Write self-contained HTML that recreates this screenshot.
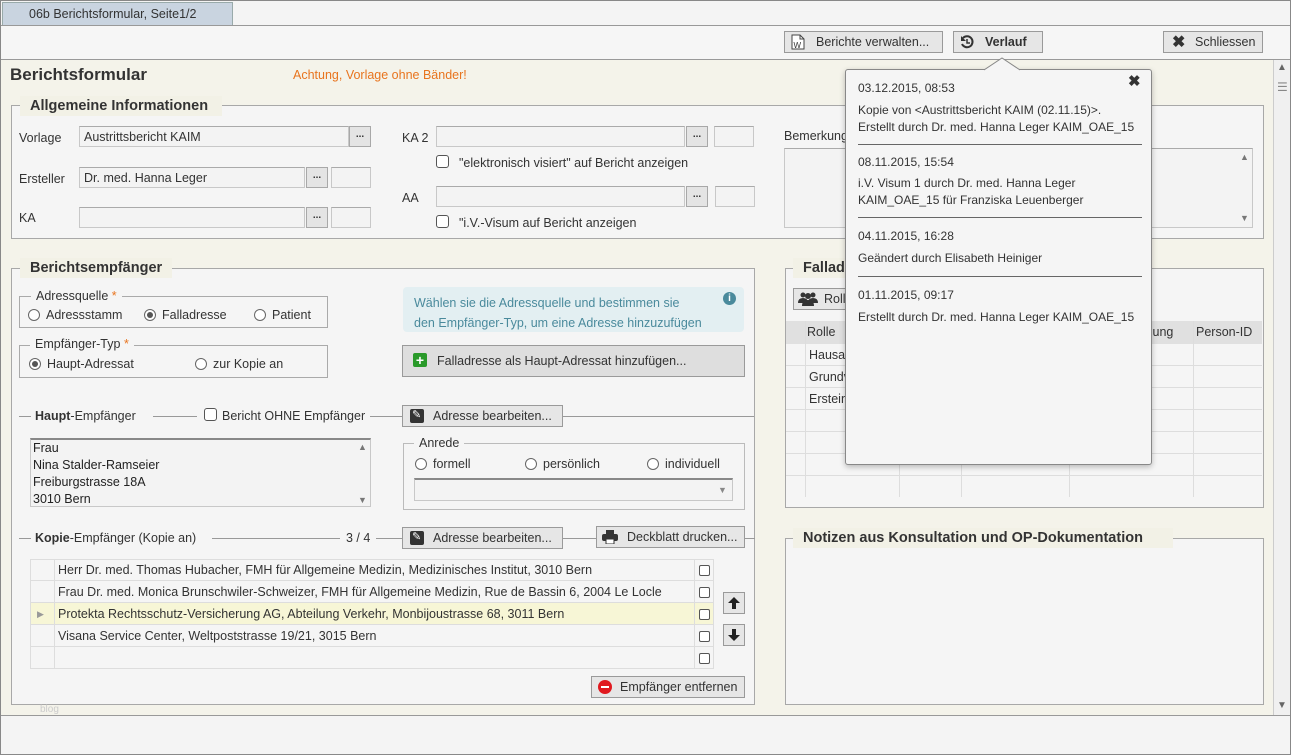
<!DOCTYPE html>
<html><head><meta charset="utf-8"><style>
*{box-sizing:border-box;margin:0;padding:0}
body{width:1291px;height:755px;position:relative;overflow:hidden;background:#fff;font-family:"Liberation Sans",sans-serif;font-size:12.5px;color:#333}
.a{position:absolute}
.t{position:absolute;white-space:nowrap}
.inp{position:absolute;background:#f3f3f3;border:1px solid #c8c8c8;border-top-color:#aaa;padding-left:4px;line-height:20px;white-space:nowrap}
.dots{position:absolute;width:22px;height:21px;background:#e4e4e4;border:1px solid #a8a8a8;text-align:center;font-weight:bold;font-size:10px;line-height:16px}
.btn{position:absolute;background:#e6e6e6;border:1px solid #9a9a9a;white-space:nowrap;line-height:20px}
.box{position:absolute;border:1px solid #a8a8a8;background:#f5f5f5}
.leg{position:absolute;background:#f2f1e6;font-weight:bold;font-size:14.5px;padding:0 10px;line-height:20px;white-space:nowrap}
.cb{position:absolute;width:13px;height:13px;border:1px solid #555;border-radius:3px;background:#fff}
.rb{position:absolute;width:12px;height:12px;border:1px solid #666;border-radius:50%;background:#fff}
.rb.on::after{content:"";position:absolute;left:2px;top:2px;width:6px;height:6px;border-radius:50%;background:#555}
.hl{position:absolute;height:1px;background:#999}
.row{position:absolute;left:31px;width:682px;height:22px;border-bottom:1px solid #ddd;line-height:22px}
.row span{position:absolute;left:27px}
.row i{position:absolute;left:23px;top:0;bottom:0;width:1px;background:#ddd}
.row b{position:absolute;left:663px;top:0;bottom:0;width:1px;background:#ddd}
.row .cb{left:668px;top:6px;width:11px;height:11px;border-radius:2px}
.pop .t{font-size:12px}
</style></head><body>
<div class="a" style="left:0;top:0;width:1291px;height:755px;border:1px solid #888;background:#f4f4f4"></div>
<div class="a" style="left:2px;top:2px;width:231px;height:24px;background:#c9d4e0;border:1px solid #9aa;border-bottom:none"></div>
<div class="t" style="left:29px;top:7px;color:#333">06b Berichtsformular, Seite1/2</div>
<div class="a" style="left:1px;top:25px;width:1289px;height:1px;background:#999"></div>
<div class="a" style="left:1px;top:26px;width:1289px;height:33px;background:#f6f6f6"></div>
<div class="a" style="left:1px;top:59px;width:1289px;height:1px;background:#999"></div>
<div class="btn" style="left:784px;top:31px;width:159px;height:22px;padding-left:31px">Berichte verwalten...</div>
<svg class="a" style="left:791px;top:34px" width="14" height="16"><path d="M1 1h8l4 4v10H1z" fill="#fff" stroke="#444"/><path d="M9 1v4h4" fill="none" stroke="#444"/><text x="2.5" y="14" font-size="8" font-family="Liberation Sans" fill="#333">W</text></svg>
<div class="btn" style="left:953px;top:31px;width:90px;height:22px;padding-left:31px;font-weight:bold">Verlauf</div>
<svg class="a" style="left:960px;top:35px" width="14" height="14"><path d="M3 3A5.5 5.5 0 1 1 2 9" fill="none" stroke="#333" stroke-width="2"/><path d="M1 1v5h5z" fill="#333"/><path d="M7 4v4h3" fill="none" stroke="#333" stroke-width="1.5"/></svg>
<div class="btn" style="left:1163px;top:31px;width:100px;height:22px;padding-left:31px">Schliessen</div>
<div class="t" style="left:1172px;top:32px;font-size:16px;font-weight:bold">✖</div>
<div class="a" style="left:1px;top:60px;width:1272px;height:655px;background:#f4f3ea"></div>
<div class="a" style="left:1273px;top:60px;width:17px;height:655px;background:#f0f0f0;border-left:1px solid #ccc"></div>
<div class="t" style="left:1277px;top:62px;font-size:10px;color:#666">▲</div>
<div class="t" style="left:1277px;top:80px;font-size:12px;color:#888">☰</div>
<div class="t" style="left:1277px;top:700px;font-size:10px;color:#666">▼</div>
<div class="a" style="left:1px;top:715px;width:1289px;height:1px;background:#999"></div>
<div class="a" style="left:1px;top:716px;width:1289px;height:38px;background:#f4f4f4"></div>
<div class="t" style="left:10px;top:65px;font-size:17px;font-weight:bold">Berichtsformular</div>
<div class="t" style="left:293px;top:68px;color:#e8741e">Achtung, Vorlage ohne Bänder!</div>
<div class="box" style="left:11px;top:105px;width:1253px;height:134px"></div>
<div class="leg" style="left:20px;top:96px;width:202px">Allgemeine Informationen</div>
<div class="t" style="left:19px;top:131px">Vorlage</div>
<div class="inp" style="left:79px;top:126px;width:270px;height:21px">Austrittsbericht KAIM</div>
<div class="dots" style="left:349px;top:126px">...</div>
<div class="t" style="left:19px;top:172px">Ersteller</div>
<div class="inp" style="left:79px;top:167px;width:226px;height:21px">Dr. med. Hanna Leger</div>
<div class="dots" style="left:306px;top:167px">...</div>
<div class="inp" style="left:331px;top:167px;width:40px;height:21px"></div>
<div class="t" style="left:19px;top:211px">KA</div>
<div class="inp" style="left:79px;top:207px;width:226px;height:21px"></div>
<div class="dots" style="left:306px;top:207px">...</div>
<div class="inp" style="left:331px;top:207px;width:40px;height:21px"></div>
<div class="t" style="left:402px;top:131px">KA 2</div>
<div class="inp" style="left:436px;top:126px;width:249px;height:21px"></div>
<div class="dots" style="left:686px;top:126px">...</div>
<div class="inp" style="left:714px;top:126px;width:40px;height:21px"></div>
<div class="cb" style="left:436px;top:155px"></div>
<div class="t" style="left:459px;top:156px">"elektronisch visiert" auf Bericht anzeigen</div>
<div class="t" style="left:402px;top:191px">AA</div>
<div class="inp" style="left:436px;top:186px;width:249px;height:21px"></div>
<div class="dots" style="left:686px;top:186px">...</div>
<div class="inp" style="left:715px;top:186px;width:40px;height:21px"></div>
<div class="cb" style="left:436px;top:215px"></div>
<div class="t" style="left:459px;top:216px">"i.V.-Visum auf Bericht anzeigen</div>
<div class="t" style="left:784px;top:129px">Bemerkungen</div>
<div class="inp" style="left:784px;top:148px;width:469px;height:80px"></div>
<div class="t" style="left:1240px;top:152px;font-size:9px;color:#777">▲</div>
<div class="t" style="left:1240px;top:213px;font-size:9px;color:#777">▼</div>
<div class="box" style="left:11px;top:268px;width:744px;height:437px"></div>
<div class="leg" style="left:20px;top:258px;width:152px">Berichtsempfänger</div>
<div class="a" style="left:19px;top:296px;width:309px;height:32px;border:1px solid #aaa"></div>
<div class="t" style="left:31px;top:289px;background:#f5f5f5;padding:0 5px">Adressquelle <span style="color:#e8741e">*</span></div>
<div class="rb" style="left:28px;top:309px"></div><div class="t" style="left:46px;top:308px">Adressstamm</div>
<div class="rb on" style="left:144px;top:309px"></div><div class="t" style="left:162px;top:308px">Falladresse</div>
<div class="rb" style="left:254px;top:309px"></div><div class="t" style="left:272px;top:308px">Patient</div>
<div class="a" style="left:19px;top:345px;width:309px;height:33px;border:1px solid #aaa"></div>
<div class="t" style="left:30px;top:337px;background:#f5f5f5;padding:0 5px">Empfänger-Typ <span style="color:#e8741e">*</span></div>
<div class="rb on" style="left:29px;top:358px"></div><div class="t" style="left:47px;top:357px">Haupt-Adressat</div>
<div class="rb" style="left:195px;top:358px"></div><div class="t" style="left:213px;top:357px">zur Kopie an</div>
<div class="a" style="left:403px;top:287px;width:341px;height:45px;background:#e3eff2;border-radius:4px"></div>
<div class="t" style="left:414px;top:293px;color:#4a8a9c;line-height:20px">Wählen sie die Adressquelle und bestimmen sie<br>den Empfänger-Typ, um eine Adresse hinzuzufügen</div>
<div class="a" style="left:723px;top:292px;width:13px;height:13px;border-radius:50%;background:#4a8a9c;color:#fff;font-size:10px;font-weight:bold;text-align:center;line-height:13px">i</div>
<div class="btn" style="left:402px;top:345px;width:343px;height:32px;line-height:30px;padding-left:34px;background:#dedede">Falladresse als Haupt-Adressat hinzufügen...</div>
<div class="a" style="left:413px;top:353px;width:14px;height:14px;background:#2a9a2a;border-radius:2px;color:#fff;font-weight:bold;text-align:center;line-height:14px;font-size:14px">+</div>
<div class="hl" style="left:19px;top:416px;width:12px"></div>
<div class="t" style="left:35px;top:409px"><b>Haupt</b>-Empfänger</div>
<div class="hl" style="left:153px;top:416px;width:44px"></div>
<div class="cb" style="left:204px;top:408px"></div>
<div class="t" style="left:222px;top:409px">Bericht OHNE Empfänger</div>
<div class="hl" style="left:370px;top:416px;width:33px"></div>
<div class="btn" style="left:402px;top:405px;width:161px;height:22px;padding-left:30px">Adresse bearbeiten...</div>
<div class="a" style="left:410px;top:409px;width:14px;height:14px;background:#333;border-radius:2px"></div>
<div class="t" style="left:412px;top:408px;color:#fff;font-size:11px">✎</div>
<div class="hl" style="left:563px;top:416px;width:191px"></div>
<div class="inp" style="left:30px;top:438px;width:341px;height:69px;border-top:2px solid #888;line-height:17px;padding-left:2px;color:#222">Frau<br>Nina Stalder-Ramseier<br>Freiburgstrasse 18A<br>3010 Bern</div>
<div class="t" style="left:358px;top:442px;font-size:9px;color:#777">▲</div>
<div class="t" style="left:358px;top:495px;font-size:9px;color:#777">▼</div>
<div class="a" style="left:403px;top:443px;width:342px;height:67px;border:1px solid #bbb"></div>
<div class="t" style="left:414px;top:436px;background:#f5f5f5;padding:0 5px">Anrede</div>
<div class="rb" style="left:415px;top:458px"></div><div class="t" style="left:433px;top:457px">formell</div>
<div class="rb" style="left:525px;top:458px"></div><div class="t" style="left:543px;top:457px">persönlich</div>
<div class="rb" style="left:647px;top:458px"></div><div class="t" style="left:665px;top:457px">individuell</div>
<div class="inp" style="left:414px;top:478px;width:319px;height:23px;border-top:2px solid #888"></div>
<div class="t" style="left:718px;top:485px;font-size:9px;color:#888">▼</div>
<div class="hl" style="left:19px;top:538px;width:12px"></div>
<div class="t" style="left:35px;top:531px"><b>Kopie</b>-Empfänger (Kopie an)</div>
<div class="hl" style="left:212px;top:538px;width:128px"></div>
<div class="t" style="left:346px;top:531px">3 / 4</div>
<div class="hl" style="left:376px;top:538px;width:27px"></div>
<div class="btn" style="left:402px;top:527px;width:161px;height:22px;padding-left:30px">Adresse bearbeiten...</div>
<div class="a" style="left:410px;top:531px;width:14px;height:14px;background:#333;border-radius:2px"></div>
<div class="t" style="left:412px;top:530px;color:#fff;font-size:11px">✎</div>
<div class="hl" style="left:563px;top:538px;width:33px"></div>
<div class="btn" style="left:596px;top:526px;width:149px;height:22px;padding-left:30px">Deckblatt drucken...</div>
<svg class="a" style="left:602px;top:530px" width="16" height="14"><rect x="4" y="0" width="8" height="4" fill="#333"/><rect x="0" y="4" width="16" height="7" rx="2" fill="#333"/><rect x="4" y="9" width="8" height="5" fill="#fff" stroke="#333"/></svg>
<div class="hl" style="left:745px;top:538px;width:10px"></div>
<div class="a" style="left:30px;top:559px;width:684px;height:110px;border:1px solid #ddd;background:#f5f5f5"></div>
<div class="row" style="top:559px"><i></i><span>Herr Dr. med. Thomas Hubacher, FMH für Allgemeine Medizin, Medizinisches Institut, 3010 Bern</span><b></b><div class="cb"></div></div>
<div class="row" style="top:581px"><i></i><span>Frau Dr. med. Monica Brunschwiler-Schweizer, FMH für Allgemeine Medizin, Rue de Bassin 6, 2004 Le Locle</span><b></b><div class="cb"></div></div>
<div class="row" style="top:603px;background:#f7f6d6"><i></i><div class="t" style="left:6px;top:0;color:#999;font-size:9px">▶</div><span>Protekta Rechtsschutz-Versicherung AG, Abteilung Verkehr, Monbijoustrasse 68, 3011 Bern</span><b></b><div class="cb"></div></div>
<div class="row" style="top:625px"><i></i><span>Visana Service Center, Weltpoststrasse 19/21, 3015 Bern</span><b></b><div class="cb"></div></div>
<div class="row" style="top:647px;border-bottom:none"><i></i><b></b><div class="cb"></div></div>
<div class="btn" style="left:723px;top:592px;width:22px;height:22px"></div>
<svg class="a" style="left:726px;top:595px" width="16" height="16"><path d="M8 2L2 8h4v6h4V8h4z" fill="#222"/></svg>
<div class="btn" style="left:723px;top:624px;width:22px;height:22px"></div>
<svg class="a" style="left:726px;top:627px" width="16" height="16"><path d="M8 14L2 8h4V2h4v6h4z" fill="#222"/></svg>
<div class="btn" style="left:591px;top:676px;width:154px;height:22px;padding-left:28px">Empfänger entfernen</div>
<div class="a" style="left:598px;top:680px;width:14px;height:14px;border-radius:50%;background:#e0191f"></div>
<div class="a" style="left:601px;top:686px;width:8px;height:2px;background:#fff"></div>
<div class="t" style="left:40px;top:704px;font-size:10px;color:#ccc">blog</div>
<div class="box" style="left:785px;top:268px;width:479px;height:240px"></div>
<div class="leg" style="left:793px;top:258px;width:110px">Falladressen</div>
<div class="btn" style="left:793px;top:288px;width:70px;height:22px;padding-left:30px">Rollen</div>
<svg class="a" style="left:798px;top:291px" width="20" height="15"><circle cx="5" cy="4" r="2.5" fill="#333"/><circle cx="15" cy="4" r="2.5" fill="#333"/><circle cx="10" cy="5" r="3" fill="#333"/><path d="M0 12q0-5 5-5t5 5zM10 12q0-5 5-5t5 5z" fill="#333"/><path d="M4 15q0-6 6-6t6 6z" fill="#333"/></svg>
<div class="a" style="left:786px;top:321px;width:476px;height:23px;background:#e0e0e0"></div>
<div class="t" style="left:807px;top:325px">Rolle</div>
<div class="t" style="left:1140px;top:325px">eilung</div>
<div class="t" style="left:1196px;top:325px">Person-ID</div>
<div class="a" style="left:786px;top:344px;width:476px;height:153px;background:repeating-linear-gradient(#f5f5f5 0 21px,#ddd 21px 22px)"></div>
<div class="a" style="left:805px;top:321px;width:1px;height:176px;background:#ddd"></div>
<div class="a" style="left:899px;top:344px;width:1px;height:153px;background:#ddd"></div>
<div class="a" style="left:961px;top:344px;width:1px;height:153px;background:#ddd"></div>
<div class="a" style="left:1069px;top:344px;width:1px;height:153px;background:#ddd"></div>
<div class="a" style="left:1193px;top:321px;width:1px;height:176px;background:#ddd"></div>
<div class="t" style="left:809px;top:348px">Hausarzt</div>
<div class="t" style="left:809px;top:370px">Grundversorger</div>
<div class="t" style="left:1130px;top:370px">rum</div>
<div class="t" style="left:809px;top:392px">Ersteinweiser</div>
<div class="box" style="left:785px;top:538px;width:479px;height:167px"></div>
<div class="leg" style="left:793px;top:528px;width:380px">Notizen aus Konsultation und OP-Dokumentation</div>
<div class="pop">
<div class="a" style="left:845px;top:69px;width:307px;height:396px;background:#f5f5f5;border:1px solid #888;border-radius:3px;box-shadow:0 2px 6px rgba(0,0,0,.25)"></div>
<svg class="a" style="left:984px;top:57px" width="36" height="14"><path d="M0 13L18 1L36 13" fill="#f5f5f5" stroke="#888"/></svg>
<div class="t" style="left:1128px;top:72px;font-size:15px!important;font-weight:bold">✖</div>
<div class="t" style="left:858px;top:81px">03.12.2015, 08:53</div>
<div class="t" style="left:858px;top:102px;line-height:17px">Kopie von &lt;Austrittsbericht KAIM (02.11.15)&gt;.<br>Erstellt durch Dr. med. Hanna Leger KAIM_OAE_15</div>
<div class="hl" style="left:858px;top:144px;width:284px;background:#666"></div>
<div class="t" style="left:858px;top:155px">08.11.2015, 15:54</div>
<div class="t" style="left:858px;top:175px;line-height:17px">i.V. Visum 1 durch Dr. med. Hanna Leger<br>KAIM_OAE_15 für Franziska Leuenberger</div>
<div class="hl" style="left:858px;top:217px;width:284px;background:#666"></div>
<div class="t" style="left:858px;top:229px">04.11.2015, 16:28</div>
<div class="t" style="left:858px;top:251px">Geändert durch Elisabeth Heiniger</div>
<div class="hl" style="left:858px;top:276px;width:284px;background:#666"></div>
<div class="t" style="left:858px;top:288px">01.11.2015, 09:17</div>
<div class="t" style="left:858px;top:310px">Erstellt durch Dr. med. Hanna Leger KAIM_OAE_15</div>
</div>
</body></html>
